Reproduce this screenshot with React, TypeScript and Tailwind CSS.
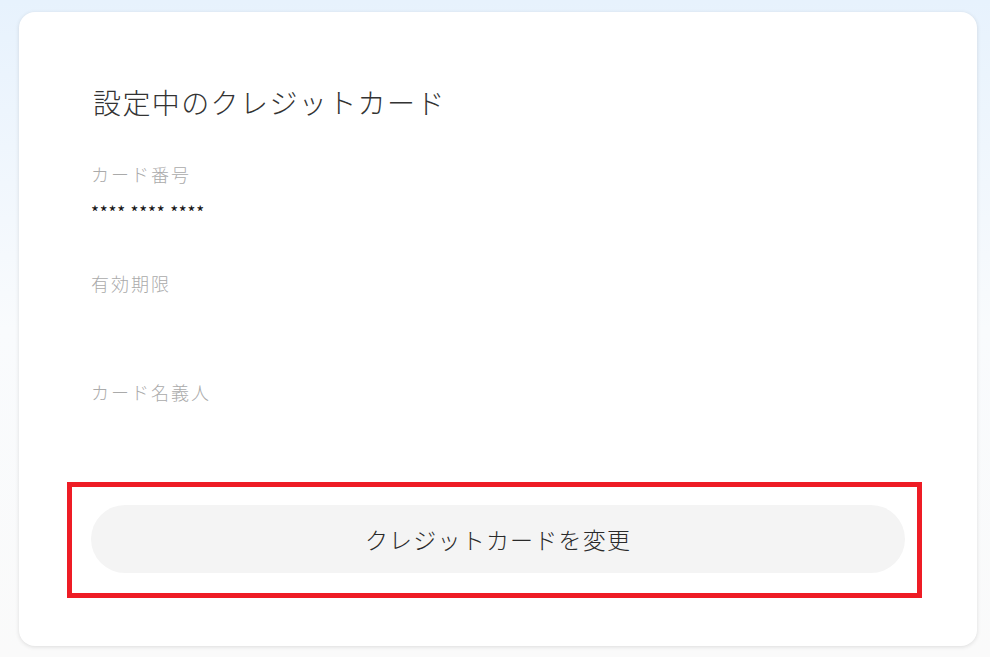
export default function App() {
  const fields = [
    { label: 'カード番号', value: '**** **** ****' },
    { label: '有効期限', value: '' },
    { label: 'カード名義人', value: '' },
  ];

  return (
    <div
      className="min-h-[657px] bg-gradient-to-b from-[#e7f2fd] via-[#f9fbfd] to-[#fafafa] pl-[19px] pr-[13px] pt-[12px] pb-[12px]"
      style={{ fontFamily: '"Noto Sans CJK JP", "Noto Sans", sans-serif' }}
    >
      <div className="rounded-[16px] bg-white shadow-[0_1px_4px_rgba(0,0,0,0.12)] px-[72px] pt-[70px] pb-[48px]">
        <h1 className="text-[28px] leading-[40px] font-light tracking-[1.4px] text-[#333] pl-[2px]">
          設定中のクレジットカード
        </h1>

        <div className="mt-[38px] flex flex-col gap-[47px]">
          {fields.map((f) => (
            <div key={f.label}>
              <p className="text-[18px] leading-[28px] font-light tracking-[2px] text-[#aaaaaa]">
                {f.label}
              </p>
              <p className="mt-[14px] h-[20px] text-[17px] leading-[20px] tracking-[0.8px] text-[#111]">
                {f.value}
              </p>
            </div>
          ))}
        </div>

        {/* highlighted action */}
        <div className="-ml-[24px] -mr-[17px] mt-[42px] border-[5px] border-[#ee1c25] pl-[19px] pr-[12px] pt-[18px] pb-[20px]">
          <button className="flex h-[68px] w-full items-center justify-center rounded-full bg-[#f4f4f4] text-[23px] font-light tracking-[1.2px] text-[#2a2a2a]">
            クレジットカードを変更
          </button>
        </div>
      </div>
    </div>
  );
}
